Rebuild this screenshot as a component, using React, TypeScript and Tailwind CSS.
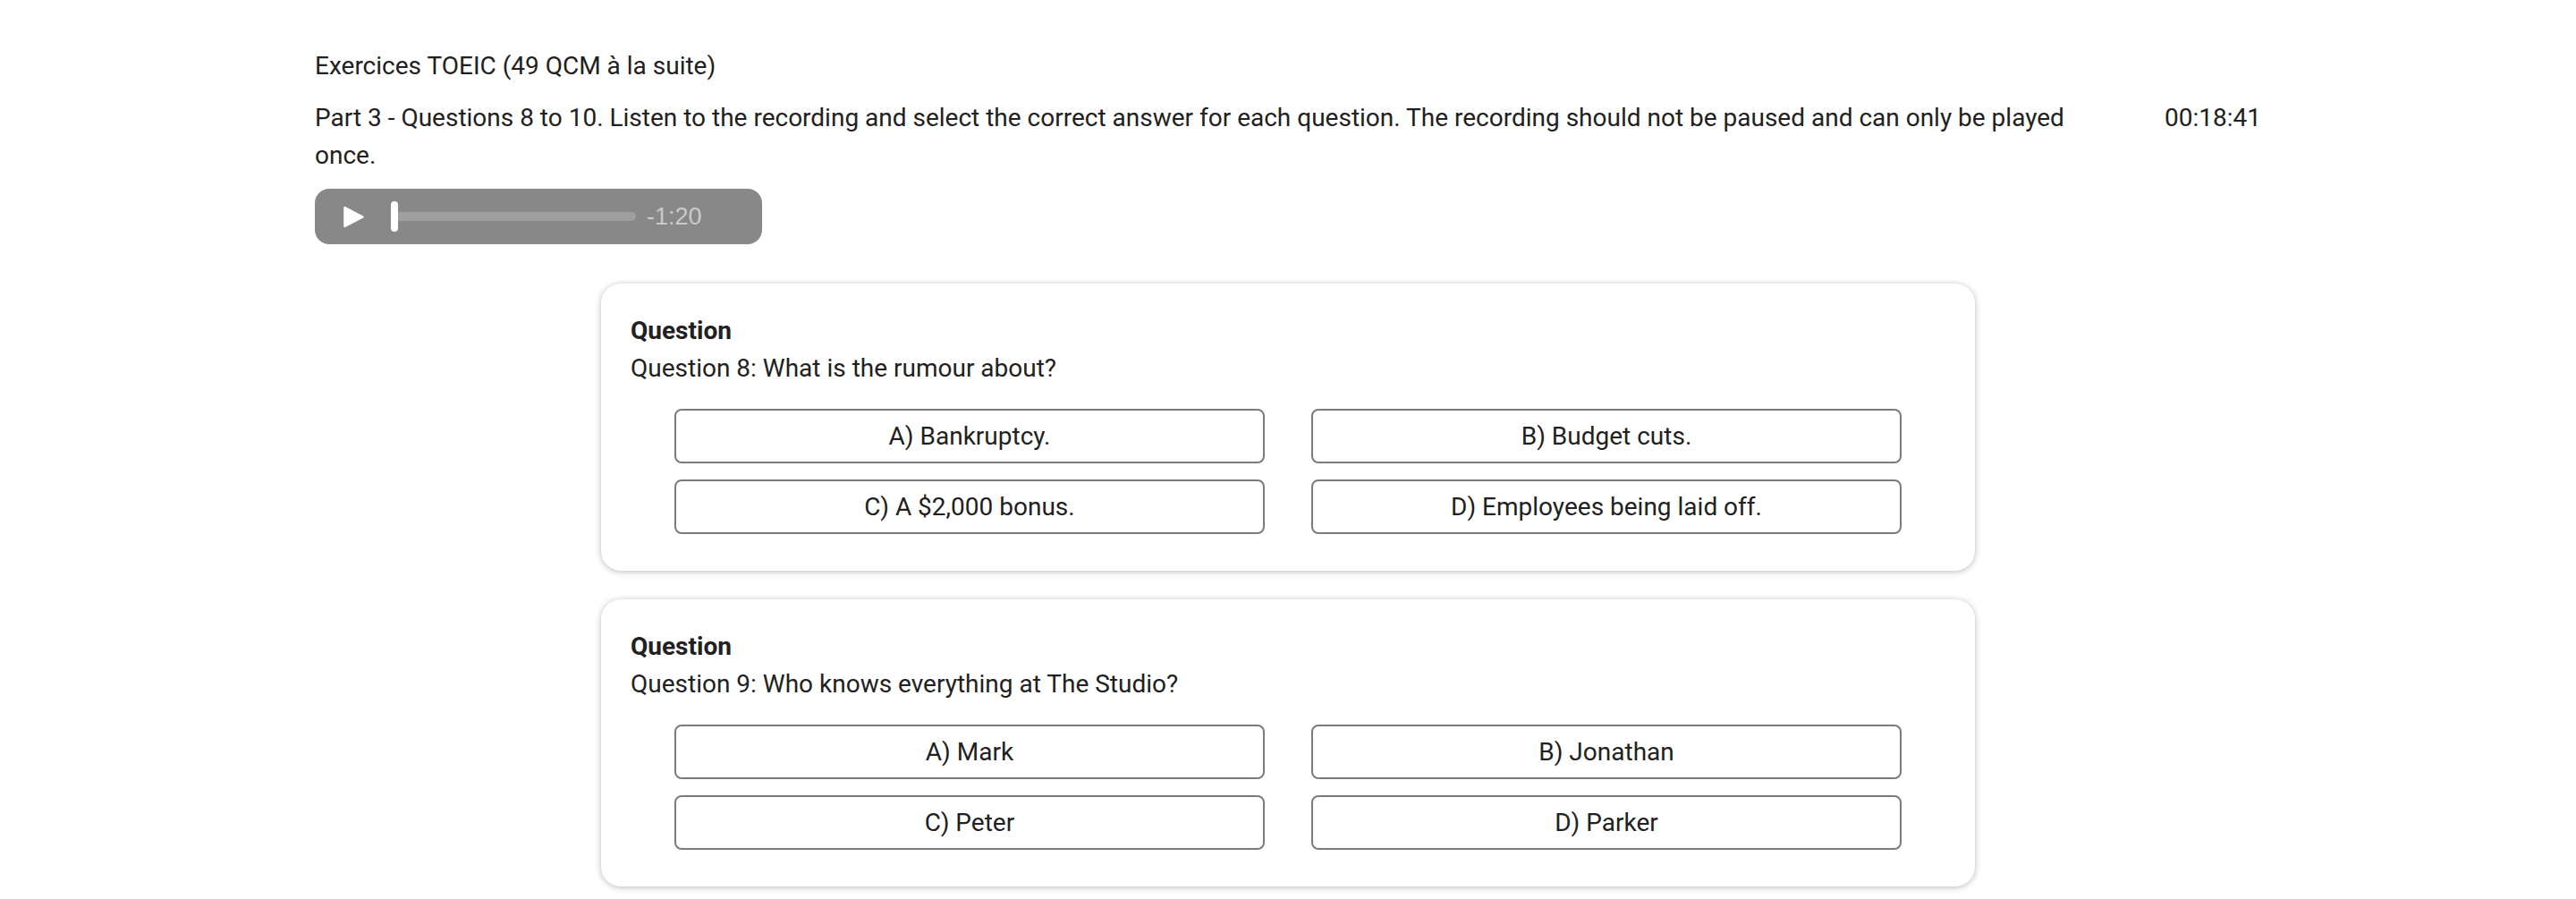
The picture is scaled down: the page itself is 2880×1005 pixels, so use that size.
import React from 'react';

interface QuestionItem {
  number: number;
  text: string;
  options: string[];
}

const questions: QuestionItem[] = [
  {
    number: 8,
    text: 'What is the rumour about?',
    options: ['A) Bankruptcy.', 'B) Budget cuts.', 'C) A $2,000 bonus.', 'D) Employees being laid off.'],
  },
  {
    number: 9,
    text: 'Who knows everything at The Studio?',
    options: ['A) Mark', 'B) Jonathan', 'C) Peter', 'D) Parker'],
  },
];

function AudioPlayer() {
  return (
    <div className="flex items-center w-[500px] h-[62px] rounded-[16px] bg-[#888888] pl-[31px]">
      <svg width="25" height="25" viewBox="0 0 25 25" className="shrink-0">
        <path d="M2.5 2 L22.5 12.5 L2.5 23 Z" fill="#ffffff" stroke="#ffffff" strokeWidth="2.5" strokeLinejoin="round" />
      </svg>
      <div className="flex items-center ml-[29px]">
        <div className="w-[8px] h-[34px] rounded-full bg-white" />
        <div className="w-[266px] h-[10px] rounded-r-full bg-[#9e9e9e]" />
      </div>
      <span className="ml-[12px] text-[27px] leading-none text-[#cacaca] font-['Liberation_Sans',Arial,sans-serif]">
        -1:20
      </span>
    </div>
  );
}

function QuestionCard({ q }: { q: QuestionItem }) {
  return (
    <div className="bg-white rounded-[22px] shadow-[0_1px_7px_rgba(0,0,0,0.28)] pt-[32px] pb-[41px] px-[33px]">
      <div className="font-bold">Question</div>
      <div>
        Question {q.number}: {q.text}
      </div>
      <div className="grid grid-cols-2 gap-x-[52px] gap-y-[18px] mt-[24px] px-[49px]">
        {q.options.map((opt) => (
          <button
            key={opt}
            className="h-[61px] border-2 border-[#7b7b7b] rounded-[8px] flex items-center justify-center bg-white text-[#212121]"
          >
            {opt}
          </button>
        ))}
      </div>
    </div>
  );
}

export default function App() {
  return (
    <main className="min-h-screen bg-white font-['Roboto',sans-serif] text-[28px] leading-[42px] text-[#212121]">
      <div className="w-[2176px] mx-auto pt-[53px]">
        <h1 className="font-normal">Exercices TOEIC (49 QCM à la suite)</h1>

        <div className="flex justify-between items-start mt-[16px]">
          <p className="w-[2000px]">
            Part 3 - Questions 8 to 10. Listen to the recording and select the correct answer for each question. The
            recording should not be paused and can only be played once.
          </p>
          <span className="shrink-0">00:18:41</span>
        </div>

        <div className="mt-[16px]">
          <AudioPlayer />
        </div>
      </div>

      <div className="w-[1536px] mx-auto mt-[44px] flex flex-col gap-[32px] pb-[40px]">
        {questions.map((q) => (
          <QuestionCard key={q.number} q={q} />
        ))}
      </div>
    </main>
  );
}
